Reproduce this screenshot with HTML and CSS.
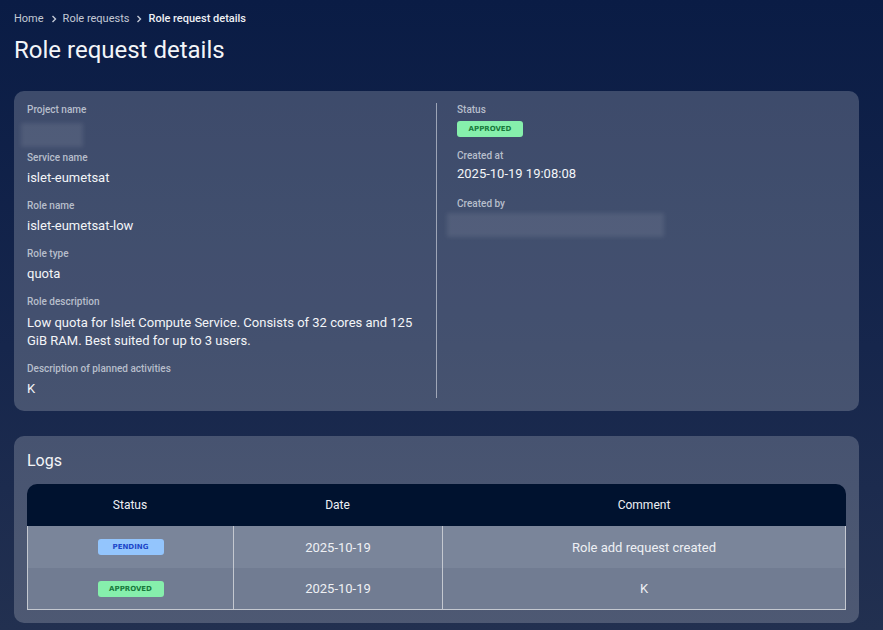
FILE: index.html
```html
<!DOCTYPE html>
<html lang="en">
<head>
    <meta charset="UTF-8">
    <meta name="viewport" content="width=device-width, initial-scale=1.0">
    <title>Role request details</title>
    <link rel="stylesheet" href="styles.css">
</head>
<body>

    <nav class="breadcrumb">
        <a href="#">Home</a>
        <svg class="chevron" viewBox="0 0 10 10"><path d="M3.5 2 L6.5 5 L3.5 8" /></svg>
        <a href="#">Role requests</a>
        <svg class="chevron" viewBox="0 0 10 10"><path d="M3.5 2 L6.5 5 L3.5 8" /></svg>
        <span class="current">Role request details</span>
    </nav>

    <h1 class="page-title">Role request details</h1>

    <!-- Details card -->
    <section class="card details">
        <div class="column">
            <div class="field">
                <div class="label">Project name</div>
                <div class="value"><div class="redacted short"></div></div>
            </div>
            <div class="field">
                <div class="label">Service name</div>
                <div class="value">islet-eumetsat</div>
            </div>
            <div class="field">
                <div class="label">Role name</div>
                <div class="value">islet-eumetsat-low</div>
            </div>
            <div class="field">
                <div class="label">Role type</div>
                <div class="value">quota</div>
            </div>
            <div class="field long">
                <div class="label">Role description</div>
                <div class="value">Low quota for Islet Compute Service. Consists of 32 cores and 125 GiB RAM. Best suited for up to 3 users.</div>
            </div>
            <div class="field">
                <div class="label">Description of planned activities</div>
                <div class="value">K</div>
            </div>
        </div>

        <div class="divider"></div>

        <div class="column">
            <div class="field status-field">
                <div class="label">Status</div>
                <div class="value"><span class="badge approved">Approved</span></div>
            </div>
            <div class="field tight">
                <div class="label">Created at</div>
                <div class="value">2025-10-19 19:08:08</div>
            </div>
            <div class="field">
                <div class="label">Created by</div>
                <div class="value"><div class="redacted wide"></div></div>
            </div>
        </div>
    </section>

    <!-- Logs card -->
    <section class="card logs">
        <h2>Logs</h2>
        <table class="log-table">
            <thead>
                <tr>
                    <th class="col-status">Status</th>
                    <th class="col-date">Date</th>
                    <th>Comment</th>
                </tr>
            </thead>
            <tbody>
                <tr>
                    <td><span class="badge pending">Pending</span></td>
                    <td>2025-10-19</td>
                    <td>Role add request created</td>
                </tr>
                <tr>
                    <td><span class="badge approved">Approved</span></td>
                    <td>2025-10-19</td>
                    <td>K</td>
                </tr>
            </tbody>
        </table>
    </section>

</body>
</html>
```

FILE: styles.css
```css
html {
    height: 100%;
}

body {
    margin: 0;
    min-height: 100%;
    padding: 0 24px 0 14px;
    font-family: 'Roboto', 'Liberation Sans', sans-serif;
    background: linear-gradient(180deg, #0a1c45 0%, #16264c 55%, #223050 100%);
    color: #f2f4f7;
    box-sizing: border-box;
}

.breadcrumb {
    display: flex;
    align-items: center;
    padding-top: 12px;
    height: 14px;
    font-size: 11px;
    line-height: 14px;
}

.breadcrumb a {
    color: #c3c9d5;
    text-decoration: none;
}

.breadcrumb .current {
    color: #eef0f4;
    font-weight: 500;
}

.chevron {
    width: 10px;
    height: 10px;
    margin: 0 4px 0 5px;
    fill: none;
    stroke: #c3c9d5;
    stroke-width: 1.4;
}

.page-title {
    margin: 10px 0 0;
    font-size: 24px;
    font-weight: 400;
    line-height: 28px;
    color: #f3f5f8;
}

.card {
    background-color: rgba(255, 255, 255, 0.2);
    border-radius: 10px;
    padding: 12px 13px 13px;
}

/* Details */
.details {
    margin-top: 27px;
    display: grid;
    grid-template-columns: 1fr 1px 1fr;
    column-gap: 20px;
}

.divider {
    background-color: rgba(220, 224, 232, 0.6);
}

.field {
    margin-bottom: 12px;
}

.field:last-child {
    margin-bottom: 0;
}

.label {
    font-size: 10px;
    font-weight: 500;
    line-height: 14px;
    color: #b7becb;
    margin-bottom: 4px;
}

.value {
    display: flow-root;
    font-size: 13px;
    line-height: 18px;
    color: #f3f5f8;
}

.long .label {
    margin-bottom: 5px;
}

.status-field {
    margin-bottom: 10px;
}

.tight {
    margin-bottom: 14px;
}

.tight .label {
    margin-bottom: 2px;
}

.redacted {
    height: 24px;
    background-color: rgba(255, 255, 255, 0.09);
    filter: blur(2px);
}

.redacted.short {
    width: 62px;
    margin: 2px 0 -8px -6px;
}

.redacted.wide {
    width: 217px;
    margin: -2px 0 -4px -10px;
}

.badge {
    display: inline-block;
    width: 66px;
    height: 16px;
    line-height: 16px;
    border-radius: 3px;
    text-align: center;
    font-family: 'DejaVu Sans', sans-serif;
    font-size: 7px;
    font-weight: bold;
    text-transform: uppercase;
    vertical-align: top;
}

.badge.approved {
    background-color: #86efac;
    color: #187a3c;
}

.badge.pending {
    background-color: #93c5fd;
    color: #1d47c9;
}

/* Logs */
.logs {
    margin-top: 25px;
}

.logs h2 {
    margin: 0 0 10px;
    font-size: 16px;
    font-weight: 400;
    line-height: 26px;
    color: #f3f5f8;
}

.log-table {
    width: 100%;
    border-collapse: separate;
    border-spacing: 0;
    font-size: 13px;
    text-align: center;
}

.log-table th {
    background-color: #00122f;
    height: 42px;
    font-size: 12px;
    font-weight: 400;
    color: #eef0f4;
    padding: 0;
}

.log-table th:first-child {
    border-top-left-radius: 10px;
}

.log-table th:last-child {
    border-top-right-radius: 10px;
}

.col-status {
    width: 206px;
}

.col-date {
    width: 209px;
}

.log-table td {
    height: 41px;
    padding: 0;
    color: #eef0f4;
    border-left: 1px solid #c4c8d0;
}

.log-table td:last-child {
    border-right: 1px solid #c4c8d0;
}

.log-table tbody tr:first-child td {
    background-color: #7a859a;
    height: 42px;
}

.log-table tbody tr:last-child td {
    background-color: #717c92;
    border-bottom: 1px solid #c4c8d0;
}

.log-table td .badge {
    vertical-align: middle;
}
```
